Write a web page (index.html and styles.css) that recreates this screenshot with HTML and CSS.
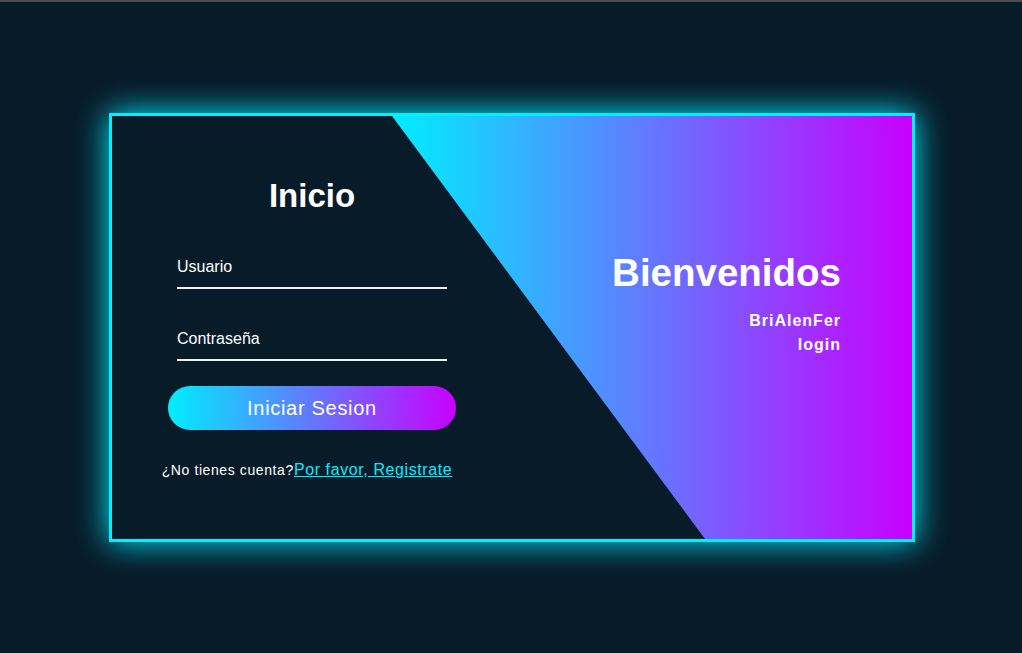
FILE: index.html
```html
<!DOCTYPE html>
<html>
<head>
    <title>Login</title>
    <link rel="stylesheet" href="styles.css">
</head>
<body>
    <div class="topbar"></div>
    <div class="page">
        <div class="wrapper">
            <div class="bg-animate"></div>

            <div class="form-box">
                <h2>Inicio</h2>
                <form action="#">
                    <div class="input-box">
                        <input type="text" id="user" required>
                        <label for="user">Usuario</label>
                    </div>
                    <div class="input-box">
                        <input type="password" id="pass" required>
                        <label for="pass">Contraseña</label>
                    </div>
                    <button type="submit" class="btn">Iniciar Sesion</button>
                    <p class="logreg-link">¿No tienes cuenta?<a href="#">Por favor, Registrate</a></p>
                </form>
            </div>

            <div class="info-text">
                <h2>Bienvenidos</h2>
                <p>BriAlenFer<br>login</p>
            </div>
        </div>
    </div>
</body>
</html>
```

FILE: styles.css
```css
* {
    margin: 0;
    padding: 0;
    box-sizing: border-box;
    font-family: 'Liberation Sans', Arial, sans-serif;
}

body {
    background: #081b29;
    color: #fff;
    height: 653px;
    overflow: hidden;
}

.topbar {
    height: 2px;
    background: #4a4a4a;
}

.page {
    height: 651px;
    display: flex;
    justify-content: center;
    align-items: center;
    padding-left: 2px;
}

.wrapper {
    position: relative;
    width: 806px;
    height: 429px;
    border: 3px solid #00f0ff;
    box-shadow: 0 0 30px #0ef;
    display: flex;
    overflow: hidden;
}

.bg-animate {
    position: absolute;
    top: 0;
    left: 280px;
    width: 520px;
    height: 100%;
    background: linear-gradient(90deg, #0ef, #c800ff);
    clip-path: polygon(0 0, 100% 0, 100% 100%, 60.2% 100%);
}

.form-box {
    position: relative;
    width: 400px;
    padding-top: 60px;
    display: flex;
    flex-direction: column;
    align-items: center;
}

.form-box h2 {
    font-size: 33px;
    line-height: 40px;
    font-weight: 700;
    margin-bottom: 23px;
}

.form-box form {
    display: flex;
    flex-direction: column;
    align-items: center;
}

.input-box {
    position: relative;
    width: 270px;
    height: 50px;
    margin-bottom: 22px;
}

.input-box input {
    width: 100%;
    height: 100%;
    background: transparent;
    border: none;
    outline: none;
    border-bottom: 2px solid #f0f0f0;
    color: #fff;
    font-size: 16px;
}

.input-box label {
    position: absolute;
    top: 19px;
    left: 0;
    font-size: 16px;
    line-height: 18px;
    color: #fff;
    pointer-events: none;
}

.btn {
    width: 288px;
    height: 44px;
    margin-top: 3px;
    border: none;
    border-radius: 22px;
    background: linear-gradient(90deg, #0ef, #c800ff);
    color: #fff;
    font-size: 20px;
    letter-spacing: 0.7px;
    cursor: pointer;
}

.logreg-link {
    margin-top: 30px;
    margin-right: 10px;
    font-size: 14px;
    line-height: 20px;
    letter-spacing: 0.6px;
    text-align: center;
}

.logreg-link a {
    color: #0ef;
    font-size: 16px;
    line-height: 20px;
    letter-spacing: 0.6px;
    text-decoration: underline;
}

.info-text {
    position: relative;
    width: 400px;
    padding-top: 134px;
    padding-right: 71px;
    text-align: right;
}

.info-text h2 {
    font-size: 38.5px;
    line-height: 46px;
    font-weight: 700;
    margin-bottom: 13px;
}

.info-text p {
    font-size: 16px;
    line-height: 24px;
    font-weight: 700;
    letter-spacing: 1px;
}
```
